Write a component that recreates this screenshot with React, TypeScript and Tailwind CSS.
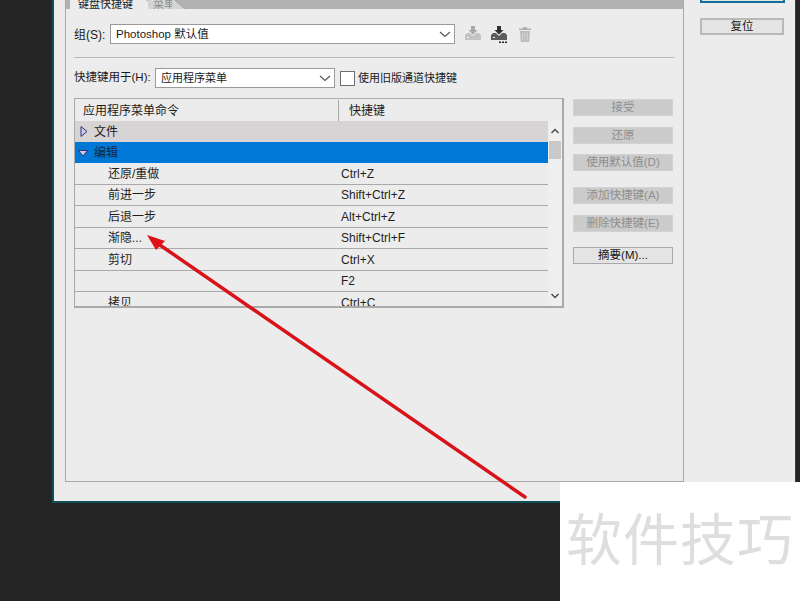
const font = "font-['Liberation_Sans','Noto_Sans_CJK_SC',sans-serif]";

const rows = [
  { name: '还原/重做', key: 'Ctrl+Z' },
  { name: '前进一步', key: 'Shift+Ctrl+Z' },
  { name: '后退一步', key: 'Alt+Ctrl+Z' },
  { name: '渐隐...', key: 'Shift+Ctrl+F' },
  { name: '剪切', key: 'Ctrl+X' },
  { name: '', key: 'F2' },
  { name: '拷贝', key: 'Ctrl+C' },
];

const SaveIcon = ({ dark }: { dark?: boolean }) => {
  const body = dark ? '#5c5c5c' : '#c4c4c4';
  const arrow = dark ? '#2e2e2e' : '#a8a8a8';
  return (
    <svg width="18" height="18" viewBox="0 0 18 18">
      <path d="M7 1h4v4h2.500L9 9.500 4.500 5H7z" fill={arrow} />
      <path d="M3 8h3l3 3 3-3h3l2 2v5H1v-5z" fill={body} />
      <rect x="3" y="12" width="2" height="1" fill={dark ? '#eee' : '#f2f2f2'} />
      {dark && <path d="M9 16.500h2v1.500H9zM12 16.500h2v1.500h-2zM15 16.500h2v1.500h-2z" fill="#222" />}
    </svg>
  );
};

const TrashIcon = () => (
  <svg width="12" height="15" viewBox="0 0 12 15">
    <path d="M4 0h4v1.500h4V3H0V1.500h4z" fill="#b0b0b0" />
    <path d="M1 4h10l-.8 11H1.800z" fill="#bcbcbc" />
    <path d="M3.500 5.500v8M6 5.500v8M8.500 5.500v8" stroke="#d8d8d8" strokeWidth="0.800" />
  </svg>
);

const Chevron = () => (
  <svg width="12" height="7" viewBox="0 0 12 7" className="ml-auto">
    <path d="M1 1l5 4.500L11 1" fill="none" stroke="#555" strokeWidth="1.100" />
  </svg>
);

const SideButton = ({ label, disabled, className }: { label: string; disabled?: boolean; className?: string }) => (
  <div
    className={`h-[17px] w-[100px] pt-px flex items-center justify-center text-[11.500px] leading-none border ${
      disabled ? 'bg-[#cbcbcb] border-[#d2d2d2] text-[#8e8e8e]' : 'bg-[#e4e4e4] border-[#a9a9a9] text-[#161616]'
    } ${className ?? ''}`}
  >
    {label}
  </div>
);

export default function App() {
  return (
    <div className={`relative w-[800px] h-[601px] overflow-hidden bg-[#252525] ${font}`}>
      <div className="ml-[52px] w-[744px] h-[503px] flex bg-[#ececec] border-l-2 border-r border-b-2 border-[#0f4f58]">
        {/* left panel */}
        <div className="ml-[11px] w-[619px] h-[482px] flex flex-col border-x border-b border-[#a9a9a9]">
          <div className="h-[9px] shrink-0 flex bg-[#b2b2b2] overflow-hidden pl-[4px]">
            <div className="w-[76px] h-[9px] bg-[#ececec] relative overflow-hidden">
              <span className="absolute top-[-4px] left-[8px] text-[11px] leading-[16px] text-[#1a1a1a] whitespace-nowrap">键盘快捷键</span>
            </div>
            <svg width="12" height="9" viewBox="0 0 12 9" className="shrink-0 -ml-px">
              <path d="M0 0h1l11 9H0z" fill="#ececec" />
            </svg>
            <div className="w-[24px] h-[9px] bg-[#d4d4d4] relative overflow-hidden -ml-[9px]">
              <span className="absolute top-[-4px] left-[5px] text-[11px] leading-[16px] text-[#8c8c8c] whitespace-nowrap">菜单</span>
            </div>
            <svg width="13" height="9" viewBox="0 0 13 9" className="shrink-0">
              <path d="M0 0h3l10 9H0z" fill="#d4d4d4" />
              <path d="M3 0l10 9" stroke="#9a9a9a" />
            </svg>
          </div>

          <div className="px-[8px] text-[12px] text-[#1a1a1a]">
            <div className="mt-[15px] flex items-center h-[20px]">
              <span className="w-[36px] leading-none pt-px">组(S):</span>
              <div className="w-[345px] h-[20px] flex items-center pl-[5px] pr-[3px] bg-white border border-[#9a9a9a]">
                <span className="text-[11.500px] pt-px">Photoshop 默认值</span>
                <Chevron />
              </div>
              <div className="ml-[9px] flex items-center gap-[8px]">
                <SaveIcon />
                <SaveIcon dark />
                <div className="ml-[3px]"><TrashIcon /></div>
              </div>
            </div>

            <div className="mt-[13px] h-px w-[600px] bg-[#b9b9b9]" />

            <div className="mt-[10px] flex items-center h-[20px]">
              <span className="w-[81px] whitespace-nowrap leading-none text-[11.500px]">快捷键用于(H):</span>
              <div className="w-[180px] h-[20px] flex items-center pl-[5px] pr-[3px] bg-white border border-[#9a9a9a]">
                <span className="text-[11px] pt-px">应用程序菜单</span>
                <Chevron />
              </div>
              <div className="ml-[5px] w-[15px] h-[15px] bg-white border border-[#6d6d6d]" />
              <span className="ml-[3px] whitespace-nowrap text-[11px]">使用旧版通道快捷键</span>
            </div>

            <div className="mt-[10px] flex gap-[9px]">
              {/* command table */}
              <div className="w-[490px] h-[210px] flex flex-col border-2 border-[#a9a9a9] border-t border-l">
                <div className="h-[22px] shrink-0 flex items-center bg-[#ececec]">
                  <span className="w-[264px] pl-[8px] pt-px border-r border-[#a9a9a9] leading-[20px]">应用程序菜单命令</span>
                  <span className="pl-[10px] pt-px">快捷键</span>
                </div>
                <div className="flex-1 flex overflow-hidden">
                  <div className="w-[474px] flex flex-col">
                    <div className="h-[21px] shrink-0 flex items-center bg-[#d6d4d4] pl-[5px] gap-[6px]">
                      <svg width="8" height="11" viewBox="0 0 8 11">
                        <path d="M1 .5l6 5-6 5z" fill="#c9c9f0" stroke="#34346a" />
                      </svg>
                      <span>文件</span>
                    </div>
                    <div className="h-[21px] shrink-0 flex items-center bg-[#0078d7] pl-[3px] gap-[6px]">
                      <svg width="10" height="8" viewBox="0 0 10 8">
                        <path d="M.500 1.500h9L5 7z" fill="#c9c9f0" stroke="#34346a" />
                      </svg>
                      <span className="text-[#10263a]">编辑</span>
                    </div>
                    {rows.map((row, i) => (
                      <div key={i} className="h-[21.500px] pt-px shrink-0 flex items-center border-b border-[#a9a9a9] text-[#1f1f1f]">
                        <span className="w-[265px] pl-[33px]">{row.name}</span>
                        <span className="pl-[1px] whitespace-nowrap">{row.key}</span>
                      </div>
                    ))}
                  </div>
                  <div className="w-[14px] flex flex-col items-center bg-[#efefef]">
                    <svg width="10" height="6" viewBox="0 0 10 6" className="mt-[7px]">
                      <path d="M1.500 5L5 1.500 8.500 5" fill="none" stroke="#444" strokeWidth="1.300" />
                    </svg>
                    <div className="mt-[7px] w-[12px] h-[18px] bg-[#c9c9c9]" />
                    <svg width="10" height="6" viewBox="0 0 10 6" className="mt-auto mb-[7px]">
                      <path d="M1.500 1L5 4.500 8.500 1" fill="none" stroke="#444" strokeWidth="1.300" />
                    </svg>
                  </div>
                </div>
              </div>

              {/* action buttons */}
              <div className="flex flex-col pt-px">
                <SideButton label="接受" disabled />
                <SideButton label="还原" disabled className="mt-[11px]" />
                <SideButton label="使用默认值(D)" disabled className="mt-[10px]" />
                <SideButton label="添加快捷键(A)" disabled className="mt-[16px]" />
                <SideButton label="删除快捷键(E)" disabled className="mt-[11px]" />
                <SideButton label="摘要(M)..." className="mt-[15px]" />
              </div>
            </div>
          </div>
        </div>

        {/* right column */}
        <div className="ml-[16px] w-[85px] flex flex-col">
          <div className="h-[3px] bg-[#e4e4e4] border-x-2 border-b-2 border-[#0f6f9a]" />
          <SideButton label="复位" className="mt-[15px] !w-[84px] !h-[17px] !border-2 !border-[#b8b8b8]" />
        </div>
      </div>

      {/* red arrow annotation */}
      <svg width="800" height="601" viewBox="0 0 800 601" className="absolute inset-0 pointer-events-none">
        <path d="M525 497L157 243" stroke="#d8141a" strokeWidth="3.500" strokeLinecap="round" />
        <path d="M147 235l18 6-9 9z" fill="#e01018" />
      </svg>

      {/* watermark */}
      <div className="absolute right-0 bottom-0 w-[240px] h-[119px] bg-white pl-[6px] pt-[26px]">
        <span className="text-[56px] leading-[66px] tracking-[1px] text-[#dedede] whitespace-nowrap">软件技巧</span>
      </div>
    </div>
  );
}
